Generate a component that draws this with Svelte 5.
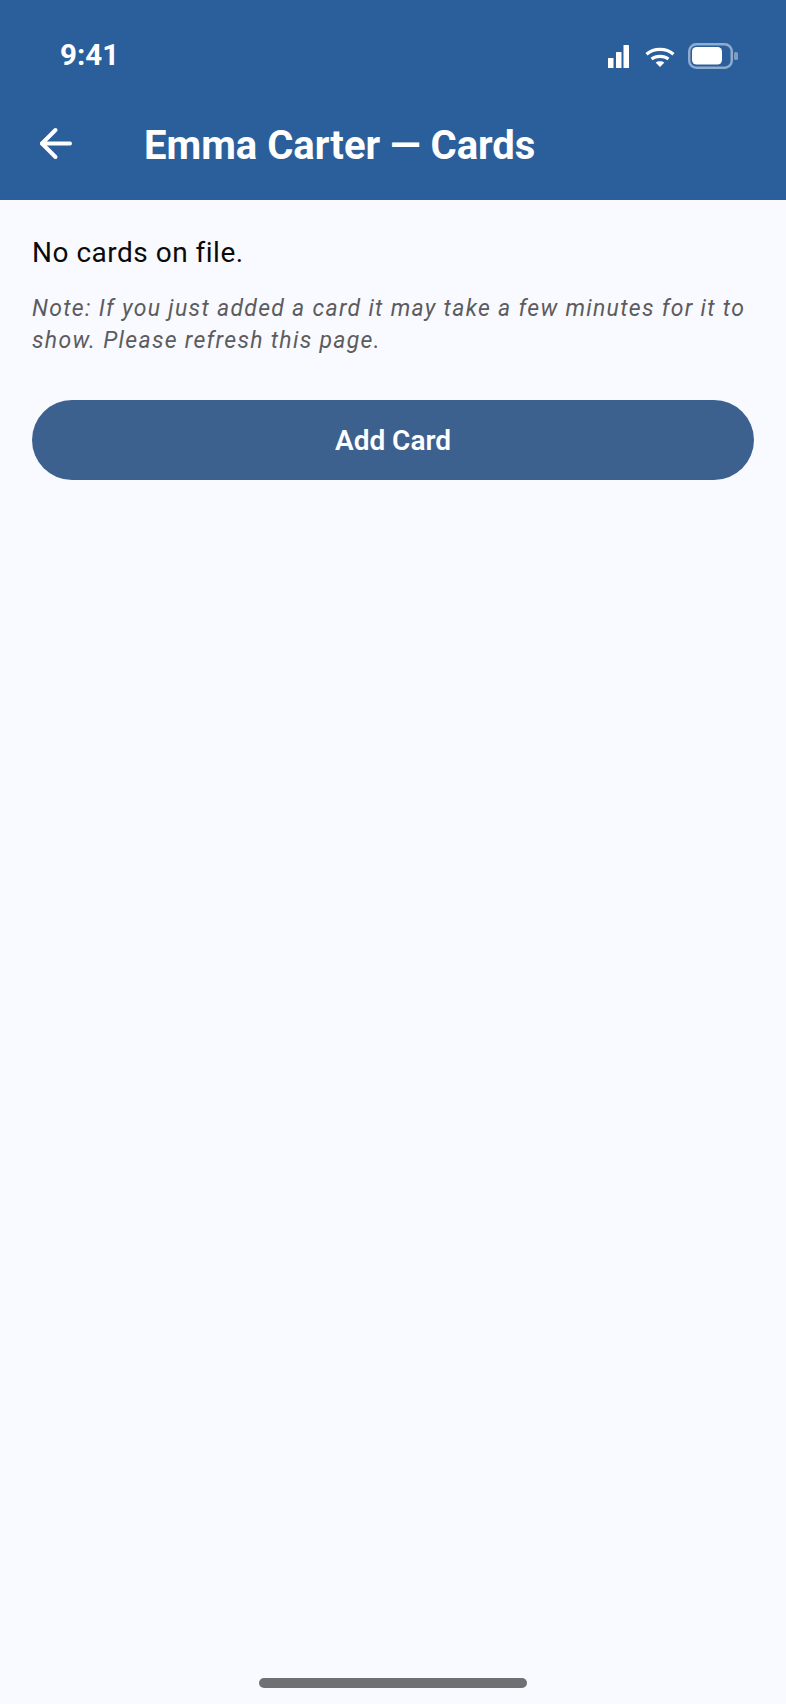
<script>
  let { name = 'Emma Carter', time = '9:41' } = $props();
</script>

<div class="screen">
  <header class="appbar">
    <div class="status">
      <span class="time">{time}</span>
      <div class="status-icons">
        <svg class="signal" width="21" height="23" viewBox="0 0 21 23" fill="#fff">
          <rect x="0" y="13" width="5.500" height="10" rx="0.6" />
          <rect x="8" y="7" width="5.500" height="16" rx="0.6" />
          <rect x="15.500" y="0" width="5.500" height="23" rx="0.6" />
        </svg>
        <svg class="wifi" width="30" height="20" viewBox="0 0 30 20" fill="none" stroke="#fff" stroke-width="3.200">
          <path d="M1.500 7.200C9 .8 21 .8 28.500 7.200" />
          <path d="M6.500 12C11.200 8.400 18.800 8.400 23.500 12" />
          <path d="M15 20 10.600 15.600C13 13.800 17 13.800 19.400 15.600Z" fill="#fff" stroke="none" />
        </svg>
        <svg class="battery" width="50" height="26" viewBox="0 0 50 26">
          <rect x="1.250" y="1.250" width="42.500" height="23.500" rx="7" fill="none" stroke="#8fabce" stroke-width="2.500" />
          <rect x="4" y="4" width="30" height="17.500" rx="4.500" fill="#fff" />
          <rect x="46" y="9" width="4" height="8" rx="1.600" fill="#7f9dc3" />
        </svg>
      </div>
    </div>
    <div class="titlebar">
      <button class="back" aria-label="Back">
        <svg width="36" height="36" viewBox="0 0 36 36" fill="none" stroke="#fff" stroke-width="4" stroke-linecap="round" stroke-linejoin="round">
          <path d="M32 16.500H4" />
          <path d="M17.500 3 4 16.500 17.500 30" />
        </svg>
      </button>
      <h1>{name} — Cards</h1>
    </div>
  </header>

  <main class="content">
    <p class="empty">No cards on file.</p>
    <p class="note">Note: If you just added a card it may take a few minutes for it to show. Please refresh this page.</p>
    <button class="add">Add Card</button>
  </main>

  <div class="home-indicator"></div>
</div>

<style>
  :global(body) {
    margin: 0;
    background: #f8faff;
  }

  .screen {
    width: 786px;
    height: 1704px;
    display: flex;
    flex-direction: column;
    background: #f8faff;
    font-family: Roboto, "Liberation Sans", sans-serif;
    overflow: hidden;
  }

  .appbar {
    height: 200px;
    background: #2b5f9b;
    color: #fff;
    flex: none;
  }

  .status {
    height: 115px;
    box-sizing: border-box;
    padding: 37px 48px 0 60px;
    display: flex;
    justify-content: space-between;
    align-items: flex-start;
  }

  .time {
    font-size: 29.500px;
    font-weight: 700;
    line-height: 37px;
  }

  .status-icons {
    display: flex;
    align-items: center;
    gap: 13px;
    margin-top: 6px;
  }

  .signal {
    margin-right: 3px;
  }

  .wifi {
    margin-top: 2px;
  }

  .titlebar {
    display: flex;
    align-items: center;
    height: 60px;
    padding-left: 38px;
  }

  .back {
    all: unset;
    display: flex;
    width: 36px;
    height: 36px;
    margin-right: 70px;
  }

  h1 {
    margin: 2px 0 0;
    font-size: 40px;
    font-weight: 700;
    line-height: 44px;
  }

  .content {
    flex: 1;
    display: flex;
    flex-direction: column;
    padding: 0 32px;
  }

  .empty {
    margin: 33px 0 0;
    font-size: 28px;
    line-height: 40px;
    letter-spacing: 0.5px;
    color: #0a0a0a;
  }

  .note {
    margin: 20px 0 0;
    font-size: 23px;
    line-height: 32px;
    font-style: italic;
    letter-spacing: 1.300px;
    color: #5c5c60;
  }

  .add {
    all: unset;
    margin-top: 43px;
    height: 80px;
    border-radius: 40px;
    background: #3c618f;
    color: #fff;
    font-size: 28px;
    font-weight: 600;
    text-align: center;
    line-height: 82px;
  }

  .home-indicator {
    flex: none;
    width: 268px;
    height: 10px;
    margin: 0 auto 16px;
    border-radius: 5px;
    background: #6f7074;
  }
</style>
